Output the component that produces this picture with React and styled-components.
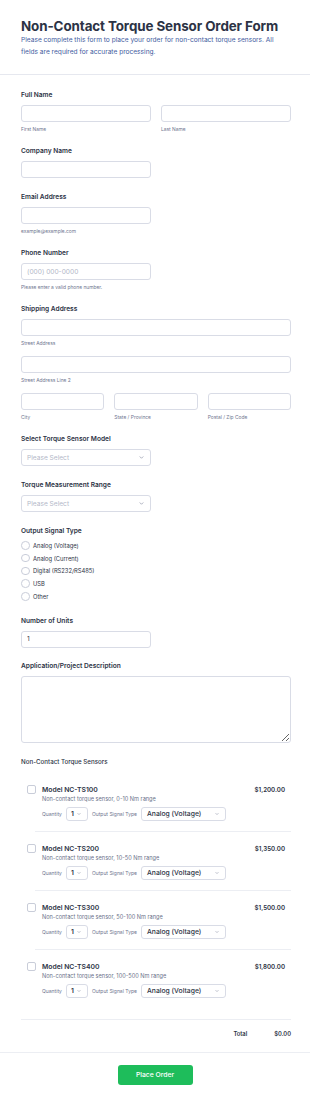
import React from "react";
import styled, { createGlobalStyle } from "styled-components";

const GlobalStyle = createGlobalStyle`
  * { box-sizing: border-box; }
  body {
    margin: 0;
    background: #ffffff;
    font-family: Inter, "Noto Sans", sans-serif;
    color: #2c3345;
  }
`;

const Page = styled.div`
  width: 310px;
  min-height: 1103px;
  background: #ffffff;
`;

const Header = styled.header`
  padding: 18px 19px 16px 21px;
  border-bottom: 1px solid #e6e8ef;
`;

const Title = styled.h1`
  margin: 0;
  font-size: 13.4px;
  line-height: 16px;
  font-weight: 700;
  color: #2c3345;
  letter-spacing: -0.1px;
`;

const Subtitle = styled.p`
  margin: 0;
  font-size: 6.6px;
  line-height: 12px;
  color: #3e5a9e;
`;

const Form = styled.form`
  padding: 15px 19px 0 21px;
`;

const Field = styled.div`
  display: flex;
  flex-direction: column;
  margin-bottom: ${(p) => (p.$tight ? 13 : 14)}px;
`;

const Label = styled.label`
  font-size: 6.6px;
  line-height: 10px;
  font-weight: 600;
  color: #2c3345;
  margin-bottom: 5px;
`;

const Input = styled.input`
  display: block;
  width: ${(p) => p.$w || "100%"};
  height: 17px;
  margin: 0;
  border: 1px solid #d9dce6;
  border-radius: 3px;
  padding: 0 5px;
  font-family: inherit;
  font-size: 6.6px;
  color: #2c3345;
  background: #fff;
  outline: none;
  &::placeholder { color: #b3b8c8; }
`;

const TextArea = styled.textarea`
  display: block;
  width: 100%;
  height: 67px;
  margin: 0;
  border: 1px solid #d9dce6;
  border-radius: 3px;
  resize: vertical;
  font-family: inherit;
  outline: none;
`;

const Sub = styled.span`
  display: block;
  margin-top: 3px;
  font-size: 4.9px;
  line-height: 8px;
  color: #6f7690;
`;

const Row = styled.div`
  display: grid;
  grid-template-columns: ${(p) => p.$cols};
  column-gap: ${(p) => p.$gap || 10}px;
`;

const Gap = styled.div`
  height: ${(p) => p.$h}px;
`;

const SelectBox = styled.div`
  width: ${(p) => p.$w || "130px"};
  height: ${(p) => p.$h || 17}px;
  border: 1px solid #d9dce6;
  border-radius: 3px;
  display: flex;
  align-items: center;
  justify-content: space-between;
  padding: 0 6px 0 ${(p) => p.$pl || 5}px;
  font-size: ${(p) => p.$fs || 6.6}px;
  font-weight: ${(p) => p.$fw || 400};
  color: ${(p) => (p.$placeholder ? "#b3b8c8" : "#2c3345")};
  background: #fff;
  flex-shrink: 0;
`;

const Chevron = ({ size = 5 }) => (
  <svg width={size} height={size} viewBox="0 0 10 10" fill="none">
    <path d="M2 3.5l3 3 3-3" stroke="#8c92a6" strokeWidth="1.4" strokeLinecap="round" strokeLinejoin="round" />
  </svg>
);

const RadioList = styled.div`
  display: flex;
  flex-direction: column;
  margin-top: -2px;
`;

const RadioItem = styled.label`
  display: flex;
  align-items: center;
  height: 12.75px;
  font-size: 5.8px;
  color: #2c3345;
`;

const RadioCircle = styled.span`
  width: 8.5px;
  height: 8.5px;
  border: 1px solid #c9cdd9;
  border-radius: 50%;
  margin-right: 3.5px;
  flex-shrink: 0;
`;

const SectionLabel = styled.div`
  font-size: 6.2px;
  line-height: 10px;
  font-weight: 500;
  color: #2c3345;
  margin-bottom: 6px;
`;

const ProductList = styled.div`
  border-bottom: 1px solid #eceef3;
  padding-bottom: 11px;
`;

const Product = styled.div`
  display: flex;
  align-items: flex-start;
  padding: 12px 6px 10px 6px;
`;

const Check = styled.span`
  width: 9px;
  height: 9px;
  border: 1px solid #c9cdd9;
  border-radius: 2px;
  margin-top: 0.5px;
  margin-right: 6px;
  flex-shrink: 0;
`;

const ProductBody = styled.div`
  flex: 1;
`;

const ProductName = styled.div`
  font-size: 6.8px;
  line-height: 10px;
  font-weight: 600;
  color: #2c3345;
`;

const ProductDesc = styled.div`
  font-size: 5.6px;
  line-height: 9px;
  color: #6a7189;
`;

const Options = styled.div`
  display: flex;
  align-items: center;
  margin-top: 3px;
`;

const OptLabel = styled.span`
  font-size: 5px;
  color: #6f7690;
  margin: 0 4px 0 ${(p) => p.$ml || 0}px;
`;

const Price = styled.div`
  font-size: 6.2px;
  line-height: 10px;
  font-weight: 600;
  color: #2c3345;
`;

const Divider = styled.div`
  height: 1px;
  background: #eceef3;
  margin-left: 14px;
`;

const TotalRow = styled.div`
  display: flex;
  justify-content: flex-end;
  align-items: center;
  height: 10px;
  margin-top: 14px;
  padding-bottom: 18px;
  font-size: 5.8px;
  font-weight: 600;
  color: #2c3345;
`;

const TotalLabel = styled.span`
  margin-right: 27px;
`;

const Footer = styled.div`
  border-top: 1px solid #eceef3;
  display: flex;
  justify-content: center;
  padding-top: 12px;
`;

const Button = styled.button`
  width: 75px;
  height: 20px;
  border: none;
  border-radius: 3px;
  background: #1ebd5b;
  color: #ffffff;
  font-family: inherit;
  font-size: 6.8px;
  font-weight: 500;
`;

const products = [
  { name: "Model NC-TS100", desc: "Non-contact torque sensor, 0-10 Nm range", price: "$1,200.00" },
  { name: "Model NC-TS200", desc: "Non-contact torque sensor, 10-50 Nm range", price: "$1,350.00" },
  { name: "Model NC-TS300", desc: "Non-contact torque sensor, 50-100 Nm range", price: "$1,500.00" },
  { name: "Model NC-TS400", desc: "Non-contact torque sensor, 100-500 Nm range", price: "$1,800.00" },
];

const signals = ["Analog (Voltage)", "Analog (Current)", "Digital (RS232/RS485)", "USB", "Other"];

const App = () => {
  return (
    <Page>
      <GlobalStyle />
      <Header>
        <Title>Non-Contact Torque Sensor Order Form</Title>
        <Subtitle>
          Please complete this form to place your order for non-contact torque sensors. All
          fields are required for accurate processing.
        </Subtitle>
      </Header>

      <Form onSubmit={(e) => e.preventDefault()}>
        <Field $tight>
          <Label>Full Name</Label>
          <Row $cols="1fr 1fr">
            <div>
              <Input />
              <Sub>First Name</Sub>
            </div>
            <div>
              <Input />
              <Sub>Last Name</Sub>
            </div>
          </Row>
        </Field>

        <Field>
          <Label>Company Name</Label>
          <Input $w="130px" />
        </Field>

        <Field $tight>
          <Label>Email Address</Label>
          <Input $w="130px" />
          <Sub>example@example.com</Sub>
        </Field>

        <Field $tight>
          <Label>Phone Number</Label>
          <Input $w="130px" placeholder="(000) 000-0000" />
          <Sub>Please enter a valid phone number.</Sub>
        </Field>

        <Field $tight>
          <Label>Shipping Address</Label>
          <Input />
          <Sub>Street Address</Sub>
          <Gap $h={9} />
          <Input />
          <Sub>Street Address Line 2</Sub>
          <Gap $h={9} />
          <Row $cols="1fr 1fr 1fr" $gap={10}>
            <div>
              <Input />
              <Sub>City</Sub>
            </div>
            <div>
              <Input />
              <Sub>State / Province</Sub>
            </div>
            <div>
              <Input />
              <Sub>Postal / Zip Code</Sub>
            </div>
          </Row>
        </Field>

        <Field>
          <Label>Select Torque Sensor Model</Label>
          <SelectBox $placeholder>
            Please Select <Chevron />
          </SelectBox>
        </Field>

        <Field>
          <Label>Torque Measurement Range</Label>
          <SelectBox $placeholder>
            Please Select <Chevron />
          </SelectBox>
        </Field>

        <Field $tight>
          <Label>Output Signal Type</Label>
          <RadioList>
            {signals.map((s) => (
              <RadioItem key={s}>
                <RadioCircle />
                {s}
              </RadioItem>
            ))}
          </RadioList>
        </Field>

        <Field $tight>
          <Label>Number of Units</Label>
          <Input $w="130px" defaultValue="1" />
        </Field>

        <Field>
          <Label>Application/Project Description</Label>
          <TextArea />
        </Field>

        <SectionLabel>Non-Contact Torque Sensors</SectionLabel>
        <ProductList>
          {products.map((p, i) => (
            <React.Fragment key={p.name}>
              <Product>
                <Check />
                <ProductBody>
                  <ProductName>{p.name}</ProductName>
                  <ProductDesc>{p.desc}</ProductDesc>
                  <Options>
                    <OptLabel>Quantity</OptLabel>
                    <SelectBox $w="22px" $h={14} $fs={6.8} $fw={600} $pl={4}>
                      1 <Chevron size={4} />
                    </SelectBox>
                    <OptLabel $ml={4}>Output Signal Type</OptLabel>
                    <SelectBox $w="85px" $h={14} $fs={6.8} $fw={500} $pl={5}>
                      Analog (Voltage) <Chevron size={4} />
                    </SelectBox>
                  </Options>
                </ProductBody>
                <Price>{p.price}</Price>
              </Product>
              {i < products.length - 1 && <Divider />}
            </React.Fragment>
          ))}
        </ProductList>

        <TotalRow>
          <TotalLabel>Total</TotalLabel>
          <span>$0.00</span>
        </TotalRow>
      </Form>

      <Footer>
        <Button type="submit">Place Order</Button>
      </Footer>
    </Page>
  );
};

export default App;
